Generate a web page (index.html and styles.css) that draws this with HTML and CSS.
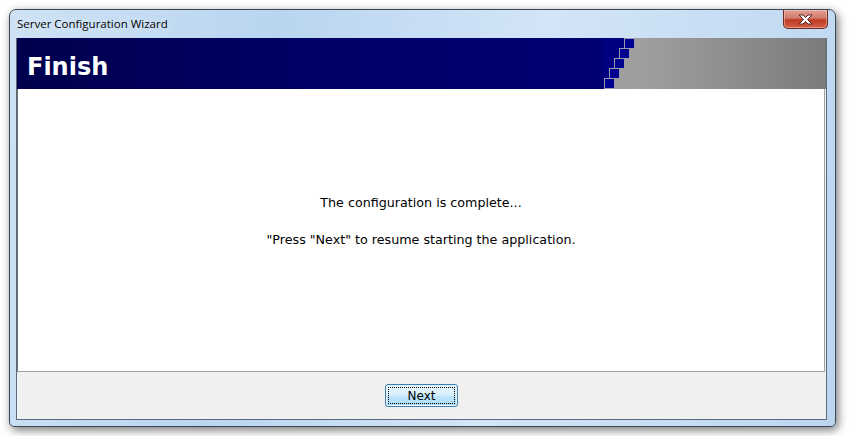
FILE: index.html
```html
<!DOCTYPE html>
<html lang="en">
<head>
    <meta charset="UTF-8">
    <title>Server Configuration Wizard</title>
    <link rel="stylesheet" href="styles.css">
</head>
<body>
    <div class="window">
        <div class="titlebar">
            <span class="title">Server Configuration Wizard</span>
            <div class="close-btn">
                <svg width="17" height="11" viewBox="0 0 17 11">
                    <path d="M2 1 H6 L8.5 3.5 L11 1 H15 L10.5 5.5 L15 10 H11 L8.5 7.5 L6 10 H2 L6.5 5.5 Z" fill="#fff" stroke="#5a2a2a" stroke-width="1"/>
                </svg>
            </div>
        </div>
        <div class="client">
            <div class="banner">
                <h1 class="banner-title">Finish</h1>
                <svg class="steps" width="31" height="51" viewBox="0 0 31 51">
                    <rect x="0" y="0" width="31" height="51" fill="#9e9e9e"/>
                    <path d="M0 0 H20 V10 H15 V20 H10 V30 H5 V40 H0 Z" fill="#000080"/>
                    <rect x="20.5" y="0.5" width="10" height="10" fill="#000090" stroke="#9a9aaa"/>
                    <rect x="15.5" y="10.5" width="10" height="10" fill="#000090" stroke="#9a9aaa"/>
                    <rect x="10.5" y="20.5" width="10" height="10" fill="#000090" stroke="#9a9aaa"/>
                    <rect x="5.5" y="30.5" width="10" height="10" fill="#000090" stroke="#9a9aaa"/>
                    <rect x="0.5" y="40.5" width="10" height="10" fill="#000090" stroke="#9a9aaa"/>
                </svg>
                <div class="banner-fade"></div>
            </div>
            <div class="panel">
                <p class="message">The configuration is complete...</p>
                <p class="message">"Press "Next" to resume starting the application.</p>
            </div>
            <div class="footer">
                <button class="btn"><span class="btn-label">Next</span></button>
            </div>
        </div>
    </div>
</body>
</html>
```

FILE: styles.css
```css
:root {
    --frame-edge: #3b4856;
    --navy: #000080;
    --face-color: #f0f0f0;
}

* {
    box-sizing: border-box;
}

body {
    margin: 0;
    padding: 9px;
    background-color: #fff;
    font-family: 'DejaVu Sans', Verdana, sans-serif;
}

.window {
    width: 827px;
    height: 418px;
    border: 1px solid var(--frame-edge);
    border-radius: 7px 7px 5px 5px;
    background: linear-gradient(100deg, #cfe2f5 0%, #b9d5f0 30%, #d3e5f7 60%, #bcd6f0 100%);
    box-shadow: 2px 3px 10px rgba(0, 0, 0, 0.55);
    padding: 0 8px 6px 6px;
    display: flex;
    flex-direction: column;
}

.titlebar {
    height: 28px;
    display: flex;
    align-items: flex-start;
    justify-content: space-between;
}

.title {
    font-family: 'Open Sans', 'Noto Sans', sans-serif;
    font-size: 11.5px;
    color: #000;
    padding-top: 6px;
    padding-left: 1px;
    text-shadow: 0 0 6px #e8f2fc;
}

.close-btn {
    width: 45px;
    height: 19px;
    margin-right: -1px;
    border: 1px solid #6b2a22;
    border-top: none;
    border-radius: 0 0 5px 5px;
    background: linear-gradient(#e3a093 0%, #d07b6c 45%, #bf3a22 55%, #d1604a 100%);
    display: flex;
    align-items: center;
    justify-content: center;
    box-shadow: inset 0 0 0 1px rgba(255, 220, 210, 0.45);
}

.client {
    flex: 1;
    display: flex;
    flex-direction: column;
    border-left: 1px solid #5b6b7b;
    border-right: 1px solid #5b6b7b;
    border-bottom: 1px solid #5b6b7b;
    background-color: var(--face-color);
}

.banner {
    height: 51px;
    display: flex;
    align-items: stretch;
    background: linear-gradient(90deg, #00004e 0%, #000068 40%, #000080 100%);
}

.banner-title {
    margin: 0;
    flex: 0 0 587px;
    color: #fff;
    font-family: 'DejaVu Sans', Verdana, sans-serif;
    font-weight: bold;
    font-size: 24px;
    line-height: 51px;
    padding: 4px 0 0 10px;
}

.steps {
    display: block;
    flex: 0 0 31px;
}

.banner-fade {
    flex: 1;
    background: linear-gradient(90deg, #a0a0a0 0%, #8e8e8e 50%, #7b7b7b 100%);
}

.panel {
    flex: 1;
    background-color: #fff;
    border: 1px solid #a0a0a0;
    border-top: none;
    border-left-color: #6e6e6e;
    margin-right: 1px;
    display: flex;
    flex-direction: column;
    align-items: center;
    justify-content: center;
    padding-top: 4px;
}

.message {
    margin: 0 0 22px 0;
    font-family: 'DejaVu Sans', Verdana, sans-serif;
    font-size: 12.7px;
    color: #000;
}

.footer {
    height: 47px;
    display: flex;
    align-items: center;
    justify-content: center;
}

.btn {
    width: 73px;
    height: 23px;
    padding: 2px;
    border: 1px solid #3c7fb1;
    border-radius: 3px;
    background: linear-gradient(#eaf6fd 0%, #d9f0fc 45%, #bee6fd 55%, #a7d9f5 100%);
    box-shadow: inset 0 0 0 1px #e6f4fc;
    font-family: 'DejaVu Sans', Verdana, sans-serif;
    font-size: 12px;
    color: #000;
}

.btn-label {
    display: flex;
    align-items: center;
    justify-content: center;
    height: 100%;
    border: 1px dotted #000;
}
```
